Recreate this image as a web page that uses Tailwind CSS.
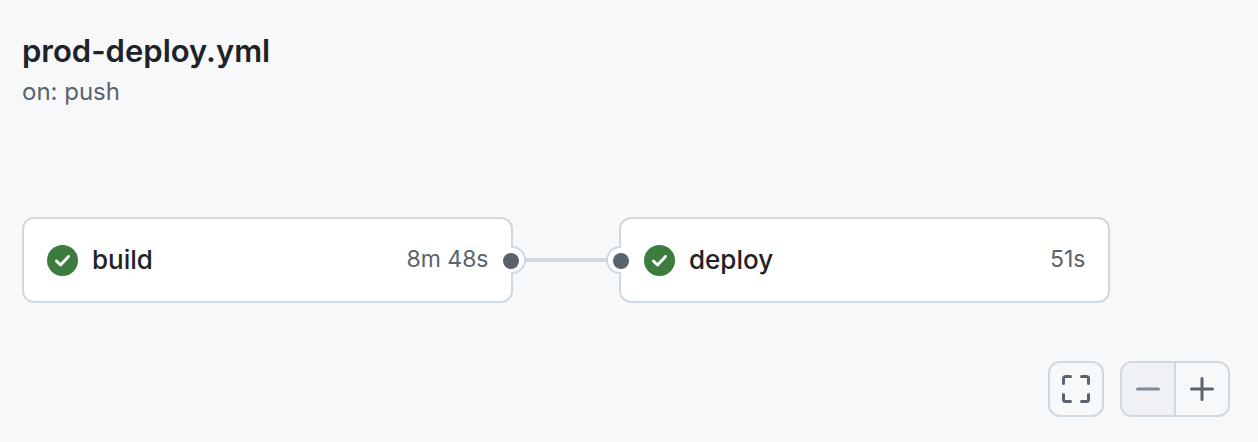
<!DOCTYPE html>
<html lang="en">

<head>
    <meta charset="UTF-8" />
    <title>prod-deploy.yml</title>
    <script src="https://cdn.jsdelivr.net/npm/@tailwindcss/browser@4"></script>
</head>

<body class="bg-[#f6f8fa] h-[442px] overflow-hidden font-['Inter',sans-serif] text-[#1f2328]">
    <div class="pt-[30px] pl-[22px]">
        <h1 class="text-[31px] leading-[42px] font-semibold">prod-deploy.yml</h1>
        <p class="mt-[2px] text-[24px] leading-[36px] text-[#59636e]">on: push</p>
    </div>

    <!-- job graph -->
    <div class="flex items-center pl-[22px] mt-[107px]">
        <div class="relative flex items-center w-[491px] h-[86px] pl-[22.5px] pr-[22.5px] bg-white border-2 border-[#d1d9e0] rounded-[12px]">
            <svg class="w-[31px] h-[31px] shrink-0" viewBox="0 0 16 16">
                <circle cx="8" cy="8" r="8" fill="#3c7d3f" />
                <path d="M4.9 8.3 7 10.3 11.1 5.9" fill="none" stroke="#fff" stroke-width="1.5" stroke-linecap="round" stroke-linejoin="round" />
            </svg>
            <span class="ml-[14.5px] pb-[2px] text-[26px] font-medium">build</span>
            <span class="ml-auto pb-[2px] text-[23px] text-[#59636e]">8m 48s</span>
            <div class="absolute right-[-15px] top-[27px] w-[28px] h-[28px] rounded-full bg-white border-2 border-[#d1d9e0] [clip-path:inset(0_0_0_13px)]"></div>
            <div class="absolute right-[-8px] top-[34px] w-[16px] h-[16px] rounded-full bg-[#59636e]"></div>
        </div>

        <div class="w-[106px] h-[4px] bg-[#d1d9e0]"></div>

        <div class="relative flex items-center w-[491px] h-[86px] pl-[22.5px] pr-[22.5px] bg-white border-2 border-[#d1d9e0] rounded-[12px]">
            <svg class="w-[31px] h-[31px] shrink-0" viewBox="0 0 16 16">
                <circle cx="8" cy="8" r="8" fill="#3c7d3f" />
                <path d="M4.9 8.3 7 10.3 11.1 5.9" fill="none" stroke="#fff" stroke-width="1.5" stroke-linecap="round" stroke-linejoin="round" />
            </svg>
            <span class="ml-[14.5px] pb-[2px] text-[26px] font-medium">deploy</span>
            <span class="ml-auto pb-[2px] text-[23px] text-[#59636e]">51s</span>
            <div class="absolute left-[-15px] top-[27px] w-[28px] h-[28px] rounded-full bg-white border-2 border-[#d1d9e0] [clip-path:inset(0_13px_0_0)]"></div>
            <div class="absolute left-[-8px] top-[34px] w-[16px] h-[16px] rounded-full bg-[#59636e]"></div>
        </div>
    </div>

    <!-- zoom controls -->
    <div class="flex justify-end gap-[16px] pr-[28px] mt-[58px]">
        <button class="flex items-center justify-center w-[56px] h-[56px] border-2 border-[#d1d9e0] rounded-[12px]">
            <svg class="w-[28px] h-[28px]" viewBox="0 0 28 28" fill="none" stroke="#59636e" stroke-width="3" stroke-linecap="round" stroke-linejoin="round">
                <path d="M1.5 8.500V3.500a2 2 0 0 1 2-2h5M19.500 1.500h5a2 2 0 0 1 2 2v5M26.500 19.500v5a2 2 0 0 1-2 2h-5M8.500 26.500h-5a2 2 0 0 1-2-2v-5" />
            </svg>
        </button>
        <div class="flex h-[56px] border-2 border-[#d1d9e0] rounded-[12px] overflow-hidden">
            <button class="flex items-center justify-center w-[54px] bg-[#eff1f5] border-r-2 border-[#d1d9e0]">
                <svg class="w-[24px] h-[4px]" viewBox="0 0 24 4"><path d="M1.5 2h21" stroke="#818b98" stroke-width="3" stroke-linecap="round" /></svg>
            </button>
            <button class="flex items-center justify-center w-[52px]">
                <svg class="w-[24px] h-[24px]" viewBox="0 0 24 24"><path d="M1.5 12h21M12 1.500v21" stroke="#59636e" stroke-width="3" stroke-linecap="round" /></svg>
            </button>
        </div>
    </div>
</body>

</html>
